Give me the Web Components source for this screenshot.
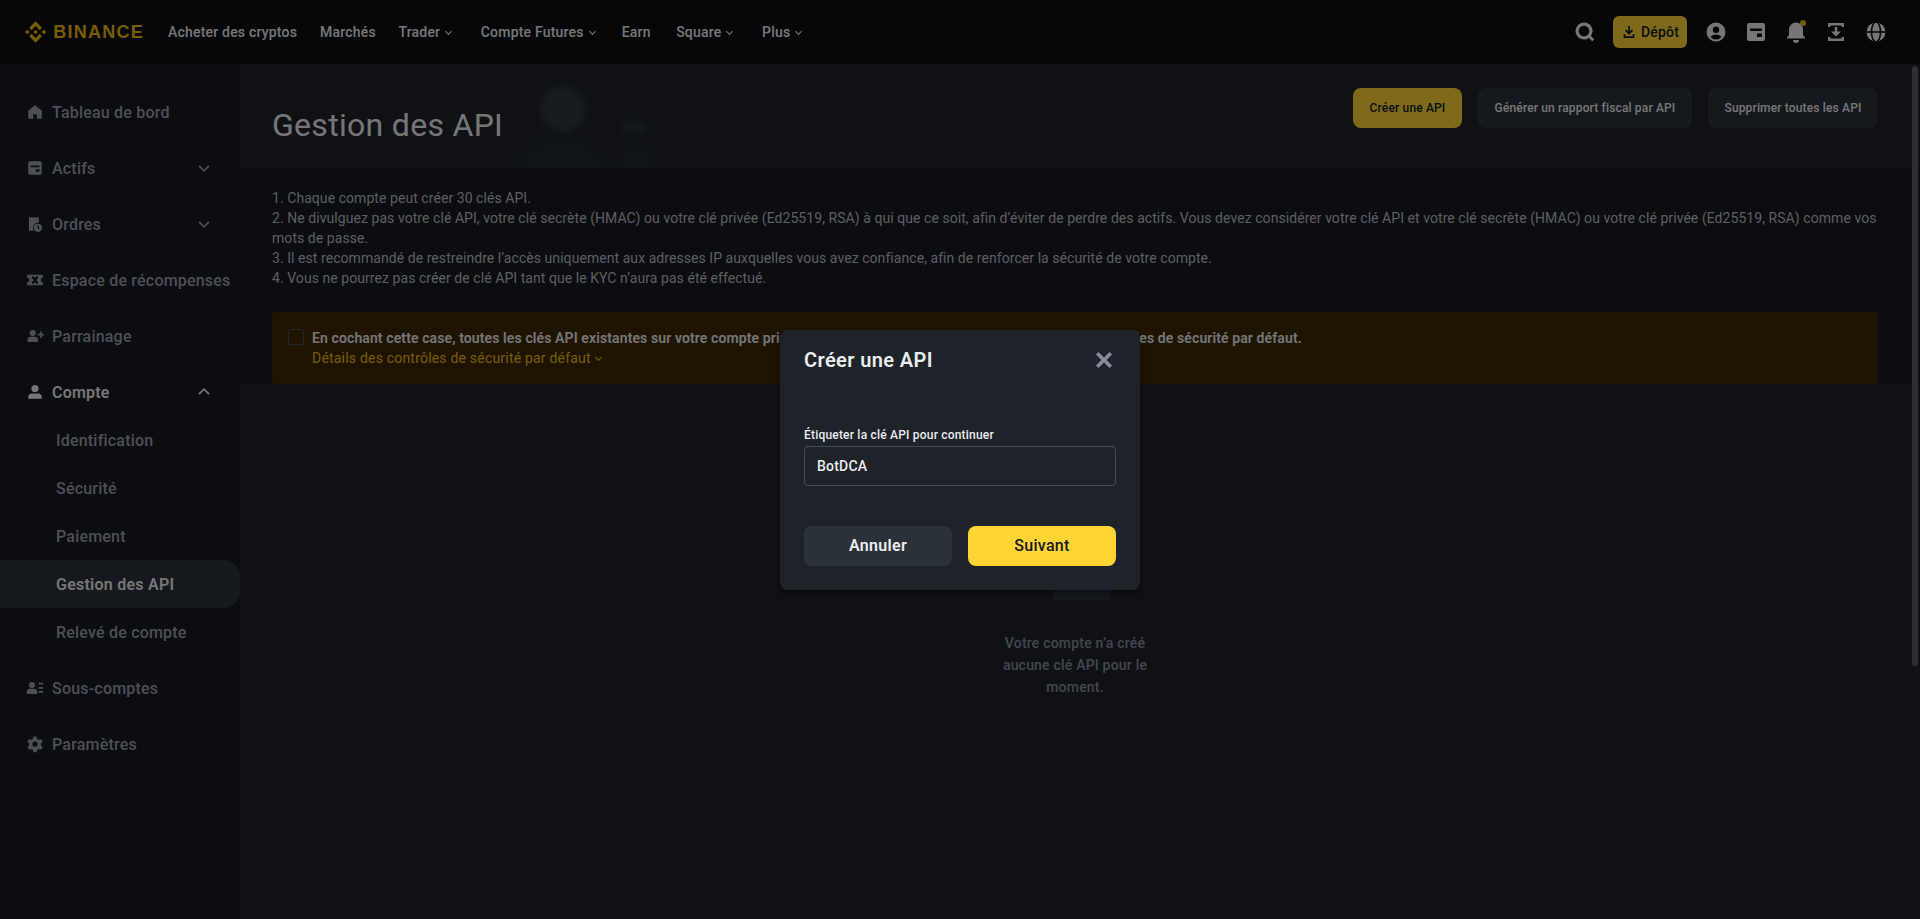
<!DOCTYPE html>
<html lang="fr"><head><meta charset="utf-8"><title>Gestion des API</title>
<style>
html,body{margin:0;height:100%;background:#181a20;overflow:hidden}
body{font-family:Roboto,"Noto Sans",sans-serif;color:#eaecef}
</style></head><body>
<template id="t-icon"><style>:host{display:inline-flex;width:var(--s,24px);height:var(--s,24px);flex:none}svg{width:100%;height:100%;fill:currentColor;display:block}</style><svg viewBox="0 0 24 24"></svg></template>
<bn-app></bn-app>
<script>
const ICONS={
search:'<path fill-rule="evenodd" d="M11 2.500a8.500 8.500 0 0 1 6.900 13.500l3.300 3.300-2 2-3.300-3.300A8.500 8.500 0 1 1 11 2.500Zm0 3.200a5.300 5.300 0 1 0 0 10.600 5.300 5.300 0 0 0 0-10.600Z"/>',
dl:'<path d="M10.700 3h2.600v8.200l3-3 1.800 1.800-6.100 6.100L5.900 10l1.800-1.800 3 3V3Z"/><path d="M4 15h2.500v3.500h11V15H20v6H4v-6Z"/>',
user:'<path fill-rule="evenodd" d="M12 2.500a9.500 9.500 0 1 1 0 19 9.500 9.500 0 0 1 0-19Zm0 4a3.200 3.200 0 1 0 0 6.400 3.200 3.200 0 0 0 0-6.400Zm0 8c-2.500 0-4.400 1-5.300 2.500a6.700 6.700 0 0 0 10.600 0c-.9-1.500-2.800-2.500-5.300-2.500Z"/>',
wallet:'<path fill-rule="evenodd" d="M5 3h14a2 2 0 0 1 2 2v14a2 2 0 0 1-2 2H5a2 2 0 0 1-2-2V5a2 2 0 0 1 2-2Zm1 5.500V11h12V8.500H6Zm7 5v3.500h5v-3.500h-5Z"/>',
bell:'<path d="M12 2.500a7 7 0 0 1 7 7V15l2 2.500v1H3v-1L5 15V9.500a7 7 0 0 1 7-7Z"/><path d="M9 20h6a3 3 0 0 1-6 0Z"/>',
tray:'<path d="M4 3h16v4h-2.500V5.500h-11V7H4V3ZM4 17h2.500v1.500h11V17H20v4H4v-4Z"/><path d="M10.800 7h2.400v4.500H17L12 16.500l-5-5h3.800V7Z"/>',
globe:'<mask id="g"><circle cx="12" cy="12" r="9.500" fill="#fff"/><ellipse cx="12" cy="12" rx="4.500" ry="10" fill="none" stroke="#000" stroke-width="1.500"/><path d="M2 12h20" stroke="#000" stroke-width="1.600"/></mask><rect width="24" height="24" mask="url(#g)"/>',
home:'<path fill-rule="evenodd" d="M12 3l9 7v11h-6.500v-6h-5v6H3V10l9-7Z"/>',
assets:'<path fill-rule="evenodd" d="M5 3h14a2 2 0 0 1 2 2v14a2 2 0 0 1-2 2H5a2 2 0 0 1-2-2V5a2 2 0 0 1 2-2Zm1 5.500V11h12V8.500H6Zm7 5v3.500h5v-3.500h-5Z"/>',
orders:'<path d="M4 3h13v7.300A7 7 0 0 0 10.300 21H4V3Z"/><path fill-rule="evenodd" d="M16 11.500a5.500 5.500 0 1 1 0 11 5.500 5.500 0 0 1 0-11Zm-.8 2.500v3.300l2.600 1.600.8-1.300-1.800-1.100V14h-1.600Z"/>',
ticket:'<path fill-rule="evenodd" d="M1.500 5h21v4a3 3 0 0 0 0 6v4h-21v-4a3 3 0 0 0 0-6V5Zm6.500 2v2.500L10.500 12 8 14.500V17h2l2-2 2 2h2v-2.500L13.500 12 16 9.500V7h-2l-2 2-2-2H8Z"/>',
refer:'<path d="M9 4a4 4 0 1 1 0 8 4 4 0 0 1 0-8ZM2 20v-2.500A4.500 4.500 0 0 1 6.500 13h5a4.500 4.500 0 0 1 4.500 4.500V20H2Z"/><path d="M18.800 6h2.400v3H24v2.400h-2.800v3h-2.400v-3H16V9h2.800V6Z"/>',
account:'<path d="M12 2.500a4.800 4.800 0 1 1 0 9.600 4.800 4.800 0 0 1 0-9.600ZM3 21v-2.500C3 16 5 14 7.500 14h9c2.500 0 4.500 2 4.500 4.500V21H3Z"/>',
sub:'<path d="M8 4a4 4 0 1 1 0 8 4 4 0 0 1 0-8ZM1 20v-2.500A4.500 4.500 0 0 1 5.500 13h5a4.500 4.500 0 0 1 4.500 4.500V20H1Z"/><path d="M17 5h6v2.400h-6V5Zm0 5.600h6V13h-6v-2.400ZM17 16h6v2.400h-6V16Z"/>',
gear:'<path fill-rule="evenodd" d="M10 2h4l.7 3 2.500 1.400 3-.9 2 3.500-2.300 2.100v2.800l2.300 2.100-2 3.500-3-.9-2.500 1.400-.7 3h-4l-.7-3-2.500-1.400-3 .9-2-3.500 2.300-2.100v-2.800L1.800 9l2-3.500 3 .9L9.300 5l.7-3Zm2 6.500a3.500 3.500 0 1 0 0 7 3.500 3.500 0 0 0 0-7Z"/>',
down:'<path d="M5.500 8 12 14.500 18.500 8l1.800 1.800L12 18 3.700 9.800Z"/>',
up:'<path d="M5.500 16 12 9.500 18.500 16l1.800-1.800L12 6 3.700 14.200Z"/>',
close:'<path d="M6.400 3.900 12 9.500l5.600-5.600 2.500 2.500L14.500 12l5.600 5.600-2.500 2.500-5.600-5.600-5.600 5.600-2.500-2.500L9.500 12 3.900 6.400Z"/>'
};
class BnIcon extends HTMLElement{connectedCallback(){if(this.shadowRoot)return;const r=this.attachShadow({mode:'open'});r.appendChild(document.getElementById('t-icon').content.cloneNode(true));r.querySelector('svg').innerHTML=ICONS[this.getAttribute('name')]||'';}}
customElements.define('bn-icon',BnIcon);

function el(tag,html,css){return class extends HTMLElement{connectedCallback(){if(this.shadowRoot)return;this.attachShadow({mode:'open'}).innerHTML='<style>'+css+'</style>'+html;}};}

customElements.define('bn-logo',el('bn-logo',`<svg viewBox="0 0 24 24" width="24" height="24"><path fill="currentColor" d="M7.800 10.100 12 5.900l4.200 4.200 2.400-2.400L12 1 5.400 7.700ZM1 12l2.400-2.400L5.800 12l-2.400 2.400ZM7.800 13.900 12 18.100l4.200-4.200 2.400 2.400L12 23l-6.600-6.700ZM18.200 12l2.400-2.400L23 12l-2.400 2.400ZM14.400 12 12 9.600 10.200 11.400 9.600 12 12 14.400Z"/></svg><span>BINANCE</span>`,
`:host{display:flex;align-items:center;gap:6px;color:#f0b90b;width:120px;flex:none}span{font:700 18px/24px "Liberation Sans",sans-serif;letter-spacing:1.25px}`));

customElements.define('bn-nav-item',el('bn-nav-item',`<slot></slot><span class="c"></span>`,
`:host{display:inline-flex;align-items:center;height:64px;font:500 14px/22px var(--f);color:#eaecef;white-space:nowrap;letter-spacing:var(--ls14)}
.c{display:none}:host([menu]) .c{display:block;width:4px;height:4px;border:solid currentColor;border-width:0 1.300px 1.300px 0;transform:rotate(45deg);margin:-2px 0 0 6px}`));

customElements.define('bn-topbar',el('bn-topbar',`<bn-logo></bn-logo>
<nav>
<bn-nav-item style="margin-left:24px">Acheter des cryptos</bn-nav-item>
<bn-nav-item style="margin-left:23px">Marchés</bn-nav-item>
<bn-nav-item menu style="margin-left:22.500px">Trader</bn-nav-item>
<bn-nav-item menu style="margin-left:29.500px">Compte Futures</bn-nav-item>
<bn-nav-item style="margin-left:27px">Earn</bn-nav-item>
<bn-nav-item menu style="margin-left:25.500px">Square</bn-nav-item>
<bn-nav-item menu style="margin-left:29.700px">Plus</bn-nav-item>
</nav>
<div class="r">
<bn-icon name="search"></bn-icon>
<a class="dep"><bn-icon name="dl" style="--s:16px"></bn-icon>Dépôt</a>
<bn-icon name="user"></bn-icon><bn-icon name="wallet"></bn-icon>
<span class="b"><bn-icon name="bell"></bn-icon><i></i></span>
<bn-icon name="tray"></bn-icon><bn-icon name="globe"></bn-icon>
</div>`,
`:host{display:flex;align-items:center;height:64px;padding:0 32px 0 24px;background:#0b0e11;box-sizing:border-box;flex:none}
nav{display:flex;align-items:center}
.r{margin-left:auto;display:flex;align-items:center;gap:16px;color:#eaecef}
.dep{display:flex;align-items:center;justify-content:center;gap:4px;width:74px;height:32px;border-radius:6px;background:#fcd535;color:#181a20;font:500 14px/22px var(--f);letter-spacing:var(--ls14);margin-right:1px}
.b{position:relative;display:flex}.b i{position:absolute;right:2px;top:0;width:6px;height:6px;border-radius:50%;background:#f0b90b}`));

customElements.define('bn-side-item',el('bn-side-item',`<span class="i"><slot name="icon"></slot></span><span class="t"><slot></slot></span><slot name="end"></slot>`,
`:host{display:flex;align-items:center;height:56px;padding:0 28px 0 26px;font:500 16px/24px var(--f);color:#98a0ac;letter-spacing:var(--ls16)}
:host([open]){color:#eaecef;font-weight:600}
.i{display:flex;width:18px;margin-right:8px;--s:18px}.t{flex:1;white-space:nowrap;padding-top:1px}`));
customElements.define('bn-side-sub',el('bn-side-sub',`<slot></slot>`,
`:host{display:flex;align-items:center;height:48px;padding:2px 0 0 56px;box-sizing:border-box;font:500 16px/24px var(--f);color:#98a0ac;border-radius:0 16px 16px 0;letter-spacing:var(--ls16)}
:host([active]){background:#2b3139;color:#eaecef;font-weight:600;letter-spacing:.25px}`));

function si(name,label,end,open){return `<bn-side-item ${open?'open':''}><bn-icon slot="icon" name="${name}"></bn-icon>${label}${end?`<bn-icon slot="end" name="${end}" style="--s:16px"></bn-icon>`:''}</bn-side-item>`;}
customElements.define('bn-sidebar',el('bn-sidebar',`${si('home','Tableau de bord')}${si('assets','Actifs','down')}${si('orders','Ordres','down')}${si('ticket','Espace de récompenses')}${si('refer','Parrainage')}${si('account','Compte','up',1)}
<bn-side-sub style="margin-top:-4px">Identification</bn-side-sub><bn-side-sub>Sécurité</bn-side-sub><bn-side-sub>Paiement</bn-side-sub><bn-side-sub active>Gestion des API</bn-side-sub><bn-side-sub>Relevé de compte</bn-side-sub>
<div style="height:4px"></div>${si('sub','Sous-comptes')}${si('gear','Paramètres')}`,
`:host{display:block;width:240px;flex:none;padding-top:20px;box-sizing:border-box;background:#181a20}`));

customElements.define('bn-btn',el('bn-btn',`<slot></slot>`,
`:host{display:flex;align-items:center;justify-content:center;height:40px;padding:0;border-radius:8px;font:500 12px/18px var(--f);background:#2b3139;color:#eaecef;white-space:nowrap;box-sizing:border-box;letter-spacing:.15px}
:host([primary]){background:#fcd535;color:#181a20}`));

customElements.define('bn-pagehead',el('bn-pagehead',`<div class="art"><i style="left:300px;top:22px;width:46px;height:46px"></i><i style="left:379px;top:56px;width:28px;height:14px;opacity:.5"></i><i class="f" style="left:283px;top:79px;width:77px;height:40px;border-radius:50% 50% 0 0"></i><i class="f" style="left:380px;top:83px;width:30px;height:30px"></i></div><h1>Gestion des API</h1>
<div class="btns"><bn-btn primary style="width:109px">Créer une API</bn-btn><bn-btn style="width:214px">Générer un rapport fiscal par API</bn-btn><bn-btn style="width:170px">Supprimer toutes les API</bn-btn></div>`,
`:host{display:flex;position:relative;height:104px;background:#1e2329;flex:none;padding:0 42px 0 32px;justify-content:space-between;box-sizing:border-box}
h1{margin:0;font:400 32px/40px var(--f);color:#eaecef;align-self:center;padding-top:18px;position:relative;letter-spacing:.3px}
.btns{display:flex;gap:16px;padding-top:24px;position:relative}
.art{position:absolute;inset:0;overflow:hidden;pointer-events:none}.art i{position:absolute;border-radius:50%;background:#353b44;filter:blur(3px);opacity:.8}.art i.f{opacity:.3;filter:blur(6px)}`));

customElements.define('bn-notice',el('bn-notice',`<span class="box"></span><div><b>En cochant cette case, toutes les clés API existantes sur votre compte principal et vos sous-comptes seront soumises aux contrôles de sécurité par défaut.</b><a>Détails des contrôles de sécurité par défaut <i></i></a></div>`,
`:host{display:flex;height:72px;margin:24px 42px 0 32px;padding:16px 16px 0 16px;gap:8px;background:#3e2804;border-radius:4px;box-sizing:border-box;flex:none;font:14px/20px var(--f);letter-spacing:var(--ls14)}
.box{width:14px;height:14px;border:1px solid #474d57;border-radius:2px;flex:none;margin-top:1px}
b{display:block;font-weight:600;color:#eaecef;white-space:nowrap;letter-spacing:.11px}a{display:block;color:#f0b90b}
i{display:inline-block;width:4px;height:4px;border:solid currentColor;border-width:0 1.300px 1.300px 0;transform:rotate(45deg);margin:0 0 3px 2px}`));

customElements.define('bn-empty',el('bn-empty',`<div class="pic"></div><p>Votre compte n’a créé aucune clé API pour le moment.</p>`,
`:host{display:flex;flex-direction:column;align-items:center;flex:1;background:#1f2329;padding-right:10px}
.pic{width:58px;height:12px;background:#2b3139;margin:204px 0 32px 14px}p{margin:0;width:160px;text-align:center;font:500 14px/22px var(--f);color:#848e9c;letter-spacing:var(--ls14)}`));

customElements.define('bn-main',el('bn-main',`<bn-pagehead></bn-pagehead>
<ol><li>1. Chaque compte peut créer 30 clés API.</li><li>2. Ne divulguez pas votre clé API, votre clé secrète (HMAC) ou votre clé privée (Ed25519, RSA) à qui que ce soit, afin d’éviter de perdre des actifs. Vous devez considérer votre clé API et votre clé secrète (HMAC) ou votre clé privée (Ed25519, RSA) comme vos mots de passe.</li><li>3. Il est recommandé de restreindre l’accès uniquement aux adresses IP auxquelles vous avez confiance, afin de renforcer la sécurité de votre compte.</li><li>4. Vous ne pourrez pas créer de clé API tant que le KYC n’aura pas été effectué.</li></ol>
<bn-notice></bn-notice><bn-empty></bn-empty><div class="bar"></div>`,
`:host{display:flex;flex-direction:column;flex:1;min-width:0;position:relative;background:#181a20}
ol{list-style:none;margin:0;padding:20px 36px 0 32px;font:400 14px/20px var(--f);color:#b7bdc6;flex:none;letter-spacing:.06px}li{margin:0}
.bar{position:absolute;right:2px;top:2px;width:6px;height:600px;border-radius:3px;background:#5a5e68}`));

customElements.define('bn-modal',el('bn-modal',`<header><h2>Créer une API</h2><bn-icon name="close"></bn-icon></header>
<label>Étiqueter la clé API pour continuer</label><div class="inp">BotDCA</div>
<div class="acts"><button class="a">Annuler</button><button class="s">Suivant</button></div>`,
`:host{display:flex;flex-direction:column;position:absolute;left:780px;top:330px;width:360px;height:260px;box-sizing:border-box;padding:24px;background:#1e2329;border-radius:8px;box-shadow:0 3px 6px rgba(0,0,0,.4);--s:24px;font-family:var(--f)}
header{display:flex;justify-content:space-between;align-items:center;height:24px;color:#848e9c;margin-top:-6px}
h2{margin:0;font:600 20px/28px var(--f);color:#eaecef;letter-spacing:.4px}
label{margin-top:55px;font:500 12px/16px var(--f);color:#eaecef;letter-spacing:.2px}
.inp{height:40px;box-sizing:border-box;margin-top:3px;border:1px solid #474d57;border-radius:4px;padding:0 12px;display:flex;align-items:center;font:500 14px/20px var(--f);color:#eaecef;letter-spacing:var(--ls14)}
.acts{display:flex;gap:16px;margin-top:40px}
button{flex:1;height:40px;border:0;border-radius:8px;font:500 16px/24px var(--f);padding:0;letter-spacing:.3px}
.a{background:#2b3139;color:#eaecef;font-weight:600}.s{background:#fcd535;color:#181a20}`));

customElements.define('bn-app',el('bn-app',`<bn-topbar></bn-topbar><div class="b"><bn-sidebar></bn-sidebar><bn-main></bn-main></div><div class="ov"></div><bn-modal></bn-modal>`,
`:host{display:flex;flex-direction:column;position:relative;width:1920px;height:919px;overflow:hidden;--f:Roboto,"Noto Sans",sans-serif;--ls14:.2px;--ls16:.2px;font-family:var(--f)}
.b{display:flex;flex:1;min-height:0}.ov{position:absolute;inset:0;background:rgba(0,0,0,.5)}`));
</script></body></html>
